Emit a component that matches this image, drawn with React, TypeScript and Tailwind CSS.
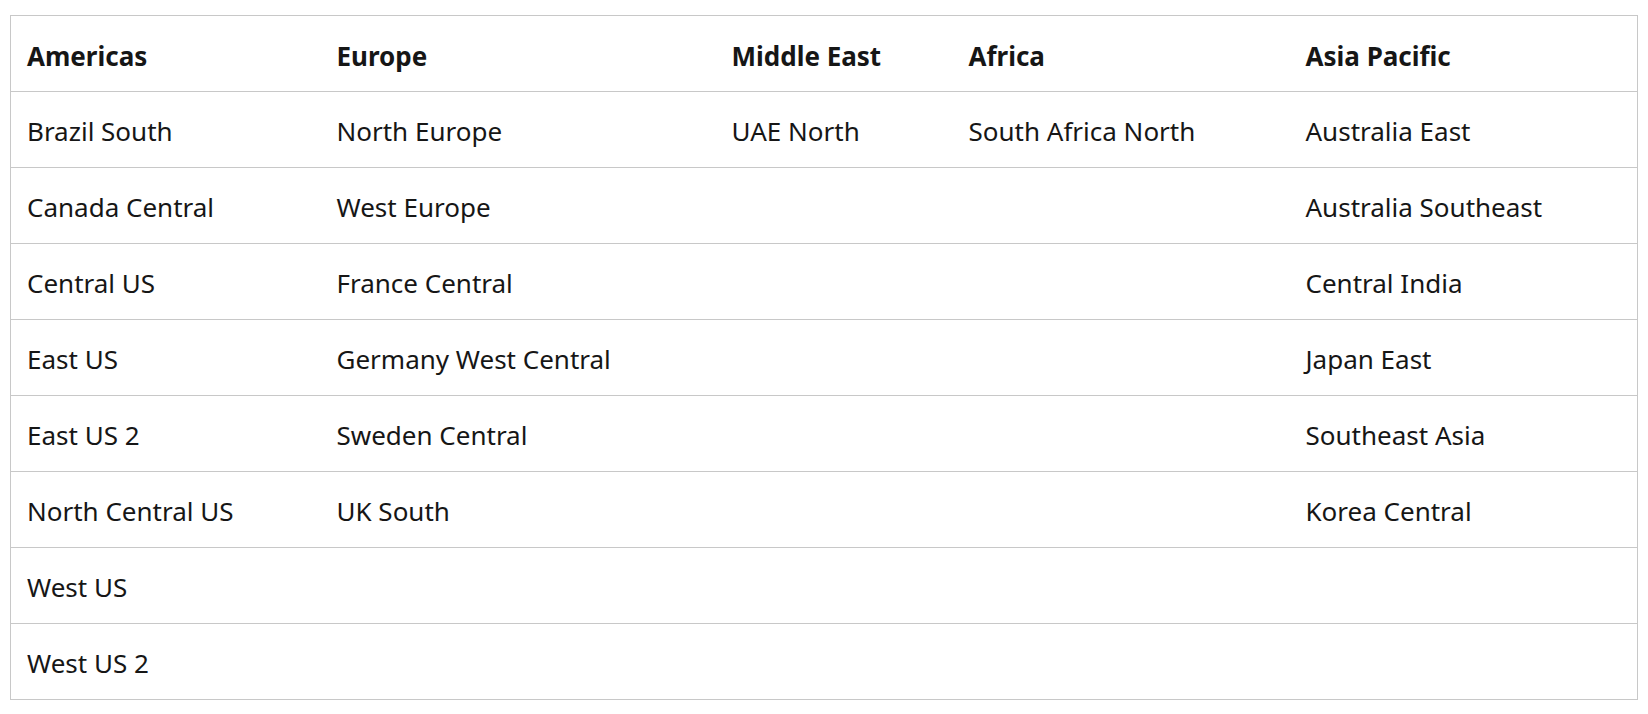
import React from "react";

const headers = ["Americas", "Europe", "Middle East", "Africa", "Asia Pacific"];
const rows: string[][] = [
  ["Brazil South", "North Europe", "UAE North", "South Africa North", "Australia East"],
  ["Canada Central", "West Europe", "", "", "Australia Southeast"],
  ["Central US", "France Central", "", "", "Central India"],
  ["East US", "Germany West Central", "", "", "Japan East"],
  ["East US 2", "Sweden Central", "", "", "Southeast Asia"],
  ["North Central US", "UK South", "", "", "Korea Central"],
  ["West US", "", "", "", ""],
  ["West US 2", "", "", "", ""],
];

export default function App() {
  return (
    <div className="w-[1648px] h-[714px] bg-white pt-[15px] pl-[10px]" style={{ fontFamily: '"Noto Sans", "Open Sans", sans-serif' }}>
      <table className="w-[1627px] table-fixed border-collapse border-[1.5px] border-[#c8c8c8] text-[#161616] text-[26px]">
        <colgroup>
          <col className="w-[310px]" />
          <col className="w-[395px]" />
          <col className="w-[237px]" />
          <col className="w-[337px]" />
          <col className="w-[348px]" />
        </colgroup>
        <thead>
          <tr className="h-[76px] border-b-[1.5px] border-[#c8c8c8]">
            {headers.map((h) => (
              <th key={h} className="text-left font-bold pl-[16px] pt-[5px] align-middle">
                {h}
              </th>
            ))}
          </tr>
        </thead>
        <tbody>
          {rows.map((r, i) => (
            <tr key={i} className="h-[76px] border-b-[1.5px] border-[#c8c8c8]">
              {r.map((c, j) => (
                <td key={j} className="pl-[16px] pt-[4px] align-middle font-normal">
                  {c}
                </td>
              ))}
            </tr>
          ))}
        </tbody>
      </table>
    </div>
  );
}
